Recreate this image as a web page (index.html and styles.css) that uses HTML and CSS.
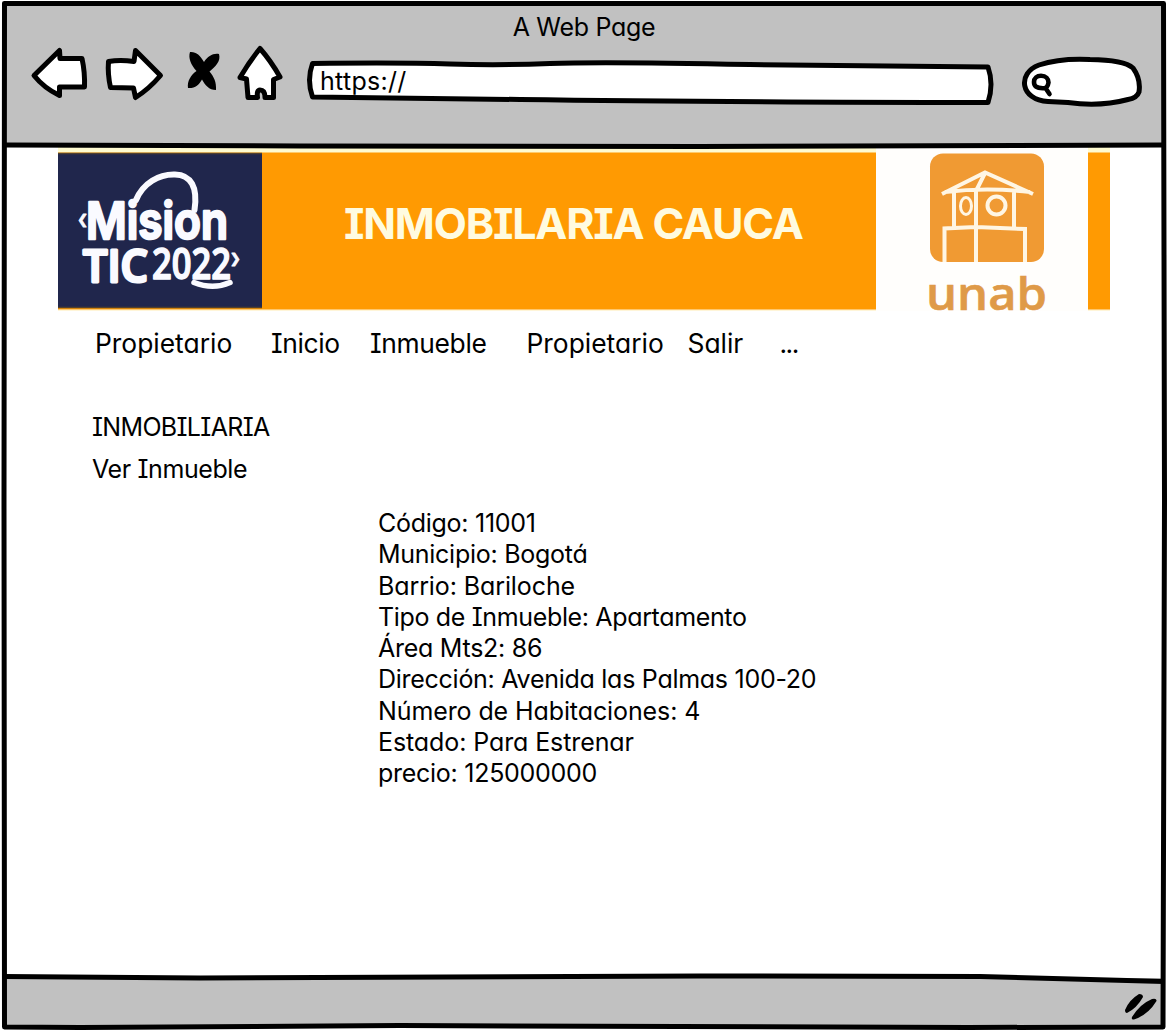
FILE: index.html
```html
<!DOCTYPE html>
<html lang="es">
<head>
<meta charset="utf-8">
<title>A Web Page</title>
<link rel="stylesheet" href="styles.css">
</head>
<body>
<div class="window">
  <header class="chrome">
    <div class="title"><span class="t-title">A Web Page</span></div>
    <div class="toolbar">
      <svg class="nav-icons" width="260" height="60" viewBox="28 43 260 60">
        <g fill="#fff" stroke="#000" stroke-width="5" stroke-linejoin="round" stroke-linecap="round">
          <path d="M34 75.500L59.500 50.500L60 58.500L82 58.500Q85 72 84.500 87L59.500 87L59.500 95.500Q44 88 34 75.500Z"/>
          <path d="M108.500 61.500Q120 59.500 134 61.500L135.500 50.500L160.500 75.500Q149 89 135.500 97.500L133.500 88L110.500 87.500Q107.500 74 108.500 61.500Z"/>
          <path d="M260 48.500Q271 61 280 77L273.500 79.500L273.500 97.500L265 97.500Q265 90 260 90Q256.500 90 257.500 97.500L248 97.500L246.500 79L240 77.500Q249 62 260 48.500Z"/>
        </g>
        <path d="M190 52C196 51.500 200 55 204 62C208 56 213 53 219 54C221 61 216 66 209.500 71.500C214 77 216.500 82 216 90C209 90 205 85 202 79.500C199 85 195 88.500 188 88C187 81 191 75 196.500 71C191 65 188 58 190 52Z"/>
      </svg>
      <div class="address">
        <svg class="address-shape" width="690" height="48" viewBox="306 58 690 48">
          <path d="M312.500 63.500Q400 62.500 450 64T550 63.500T750 64.500L988 67Q994 84 988 102.500Q700 102 520 99.500L312.500 97Q306.500 80 312.500 63.500Z" fill="#fff" stroke="#000" stroke-width="5" stroke-linejoin="round"/>
        </svg>
        <span class="t-url">https://</span>
      </div>
      <svg class="search" width="124" height="54" viewBox="1021 55 124 54">
        <path d="M1048 101.500C1020 100 1017 73 1039 65Q1060 58 1090 59.500Q1124 60 1133 68Q1141 79 1139 92Q1137 98 1128 99.500Q1100 107 1068 102.500Z" fill="#fff" stroke="#000" stroke-width="5" stroke-linejoin="round"/>
        <path d="M1041 75.800C1046 75.800 1048.500 79 1048.500 82.500C1048 86 1047 88 1044 88.200C1036 88.500 1034 86 1034 82C1034 78 1037 75.800 1041 75.800ZM1045.500 88L1049.500 94" fill="none" stroke="#000" stroke-width="4.600" stroke-linecap="round"/>
      </svg>
    </div>
  </header>

  <main class="page">
    <section class="banner">
      <svg class="mision" width="204" height="164" viewBox="58 147 204 164">
        <rect x="58" y="153" width="204" height="155" fill="#20264c"/>
        <path d="M58 153.500H262M58 307.500H262" stroke="#51402f" stroke-width="1.500"/>
        <path d="M136 200C143 183 159 174 175 174.500C191 175 198 187 194.500 210" fill="none" stroke="#fafaff" stroke-width="6" stroke-linecap="round"/>
        <g class="mision-text">
          <text x="78" y="229" font-size="28" textLength="9" lengthAdjust="spacingAndGlyphs">‹</text>
          <text x="86" y="238.500" font-size="51" textLength="142" lengthAdjust="spacingAndGlyphs" stroke-width="2.500">Mision</text>
          <text class="plain" x="83" y="282" font-size="46" textLength="65" lengthAdjust="spacingAndGlyphs" stroke-width="3">TIC</text>
          <text class="plain" x="152" y="278.500" font-size="43" textLength="79" lengthAdjust="spacingAndGlyphs" stroke-width="1.500">2022</text>
          <text x="231" y="268" font-size="28" textLength="9" lengthAdjust="spacingAndGlyphs">›</text>
        </g>
        <path d="M194 282.500Q213 290 230 282.500" fill="none" stroke="#fafaff" stroke-width="5.500" stroke-linecap="round"/>
      </svg>
      <h1 class="banner-title"><span class="t-banner">INMOBILARIA CAUCA</span></h1>
      <svg class="unab" width="212" height="164" viewBox="876 147 212 164">
        <rect x="930" y="153.500" width="114" height="108.500" rx="13" fill="#f09a33"/>
        <g fill="none" stroke="#fff6e4" stroke-width="4">
          <path d="M942 194L985 172.500L1033 194M945 192Q987 187 1030 192M985 173L976 191V262M954 192V227M1014 192V227M944.500 262V228.500L976 227L1025 229V262"/>
          <ellipse cx="966" cy="206" rx="5.500" ry="8.500" stroke-width="3"/>
          <circle cx="996.500" cy="205.500" r="9"/>
        </g>
        <rect x="992" y="201" width="9" height="9" fill="#f09a33"/>
        <text class="unab-text" x="926" y="309.500" textLength="121" lengthAdjust="spacingAndGlyphs">unab</text>
      </svg>
      <div class="banner-end"></div>
    </section>

    <nav class="menu">
      <a>Propietario</a><a class="tight">Inicio</a><a class="tight">Inmueble</a><a>Propietario</a><a>Salir</a><a class="dots">...</a>
    </nav>

    <section class="heading">
      <h2>INMOBILIARIA</h2>
      <h3>Ver Inmueble</h3>
    </section>

    <ul class="details">
      <li>Código: 11001</li>
      <li>Municipio: Bogotá</li>
      <li class="loose">Barrio: Bariloche</li>
      <li class="tight">Tipo de Inmueble: Apartamento</li>
      <li>Área Mts2: 86</li>
      <li>Dirección: Avenida las Palmas 100-20</li>
      <li class="loose">Número de Habitaciones: 4</li>
      <li class="loose">Estado: Para Estrenar</li>
      <li>precio: 125000000</li>
    </ul>
  </main>

  <footer class="status">
    <svg width="36" height="30" viewBox="1122 992 36 30">
      <path d="M1125 1010Q1129 1000 1139 994Q1143 994 1143 997Q1137 1008 1127 1013Q1125 1013 1125 1010ZM1132 1017Q1140 1004 1152 999Q1157 998 1156.500 1001Q1148 1015 1134 1019.500Q1131 1020 1132 1017Z"/>
    </svg>
  </footer>

  <svg class="outline" width="1168" height="1032" viewBox="0 0 1168 1032">
    <g fill="none" stroke="#000" stroke-width="5" stroke-linejoin="round">
      <path d="M4.500 3.500H1163.500L1164.500 500L1163 1027L968 1027.500L400 1025.500L80 1027.500L4.500 1027L4 500Z"/>
      <path d="M4 145L300 146L700 146.500L1164 145"/>
      <path d="M4 976.500L200 978L700 976L980 976.500L1164 981.500"/>
    </g>
  </svg>
</div>
</body>
</html>
```
FILE: styles.css
```css
* { box-sizing: border-box; }
body {
  margin: 0;
  background: #fff;
  color: #000;
  font-family: Inter, "Liberation Sans", sans-serif;
  font-feature-settings: "cv11", "cv08";
  font-size: 25px;
  line-height: 31.25px;
}
h1, h2, h3, ul { margin: 0; padding: 0; font-size: inherit; font-weight: 400; list-style: none; }
span, a { white-space: pre; }
svg { display: block; flex: none; }
.window {
  position: relative;
  display: grid;
  grid-template-rows: 147px 831px 54px;
  width: 1168px;
  height: 1032px;
  overflow: hidden;
}
.outline { position: absolute; inset: 0; pointer-events: none; }
.chrome { background: #c1c1c1; margin: 3px 4px 0; padding-top: 9px; }
.title { text-align: center; height: 31px; letter-spacing: -0.3px; }
.toolbar { display: flex; padding-left: 24px; }
.address { display: grid; margin: 15px 0 0 18px; }
.address-shape, .t-url { grid-area: 1 / 1; }
.t-url { padding: 8px 0 0 14px; letter-spacing: 0.3px; }
.search { margin: 12px 0 0 25px; }
.page { padding: 0 58px; }
.banner {
  display: flex;
  width: 1052px;
  height: 164px;
  background: linear-gradient(#fffbd0 5px, #ff9a02 6px, #ff9a02 162px, #fff5d8 163px);
}
.mision-text {
  fill: #fafaff;
  stroke: #fafaff;
  stroke-linejoin: round;
  font-family: Inter, sans-serif;
  font-weight: 600;
}
.mision-text .plain { font-feature-settings: "cv08" 0; font-family: "Open Sans", sans-serif; }
.banner-title {
  width: 614px;
  padding: 51px 0 0 82px;
  color: #fffbe0;
  font-size: 43px;
  line-height: 50px;
  font-weight: 700;
  letter-spacing: -1.2px;
}
.unab { background: #fffefc; overflow: visible; }
.unab-text { fill: #df9a48; font: 600 46px "Open Sans", sans-serif; stroke: #df9a48; stroke-width: 0.6px; }
.banner-end { width: 22px; }
.menu {
  display: grid;
  grid-template-columns: 176px 99px 156.500px 161px 92px 40px;
  height: 85px;
  padding: 17px 0 0 37px;
  font-size: 26.4px;
}
.menu .tight { letter-spacing: -0.35px; }
.menu .dots { letter-spacing: -1.5px; }
.heading { padding: 16px 0 0 34px; height: 112px; }
.heading h2 { height: 42px; letter-spacing: -0.68px; }
.heading h3 { letter-spacing: -0.4px; }
.details { padding-left: 320px; letter-spacing: -0.27px; }
.details .tight { letter-spacing: -0.35px; }
.details .loose { letter-spacing: -0.1px; }
.status { background: #c1c1c1; margin: 0 4px 5px; display: flex; justify-content: flex-end; padding: 14px 6px 0; }
```
